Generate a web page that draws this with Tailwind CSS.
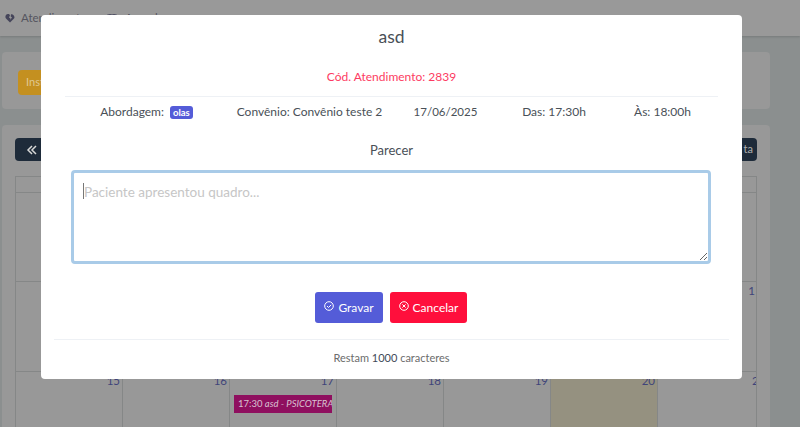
<!DOCTYPE html>
<html lang="pt-BR">
<head>
    <meta charset="UTF-8">
    <title>Atendimento</title>
    <script src="https://cdn.jsdelivr.net/npm/@tailwindcss/browser@4"></script>
</head>
<body class="font-['Lato',sans-serif] overflow-hidden">
    <div class="relative h-[427px] w-[800px] overflow-hidden bg-[#8b8f8f]">
        <!-- page behind the modal -->
        <nav class="flex h-9 items-center bg-[#999999] pl-1 text-[11.5px] text-[#55555f] shadow-[0_1px_2px_rgba(0,0,0,0.15)]">
            <svg class="ml-px h-2.5 w-2.5" viewBox="0 0 10 10"><path d="M5 9.500 1 5.500C-.5 3.500 1 1 3 1c1 0 1.600.5 2 1.200L4 4.500l1.500 1L5 7l2-2.500L5.700 3.500 6 1.300C8 .5 10.500 3.500 9 5.500z" fill="#45455a"/></svg>
            <span class="ml-[6px] w-[86px]">Atendimentos</span>
            <svg class="h-2.5 w-2.5" viewBox="0 0 10 10"><rect x="1" y="2" width="8" height="7" fill="none" stroke="#45455a" stroke-width="1.200"/><path d="M1 4h8M3 1v2M7 1v2" stroke="#45455a"/></svg>
            <span class="ml-2">Agenda</span>
        </nav>
        <main class="flex flex-col gap-4 pl-[2px] pr-[30px] pt-4">
            <section class="h-[57px] rounded bg-[#989898] px-4 pt-4">
                <button class="h-[25px] w-[60px] rounded bg-[#c49020] pl-2 text-left text-[11px] text-[#e0c890]">Instruções</button>
            </section>
            <section class="rounded-t bg-[#989898] px-[13px] pt-[13px]">
                <div class="flex justify-between">
                    <button class="flex h-[23px] w-[33px] items-center justify-center rounded bg-[#1e2b3a] text-[#d8d8d8]">
                        <svg class="h-3 w-3" viewBox="0 0 12 12" fill="none" stroke="currentColor" stroke-width="1.500"><path d="M6 2 2 6l4 4M10 2 6 6l4 4"/></svg>
                    </button>
                    <button class="flex h-[23px] w-[33px] items-center justify-end rounded bg-[#1e2b3a] pr-1 text-[11px] text-[#b0b0b0]">ta</button>
                </div>
                <div class="mt-[15px] grid h-[260px] grid-cols-[107px_107px_107px_107px_107px_107px_1fr] grid-rows-[16px_89px_90px_1fr] border-l border-t border-r border-[#858787] text-right text-[11.5px] leading-4 text-[#3f447a]">
                    <div class="col-span-7 border-b border-[#858787]"></div>
                    <div class="col-span-7 border-b border-[#858787]"></div>
                    <div class="col-span-7 border-b border-[#858787] pr-[1px] pt-[1px]">1</div>
                    <div class="border-r border-[#858787] pr-[2px] pt-[1px]">15</div>
                    <div class="border-r border-[#858787] pr-[2px] pt-[1px]">16</div>
                    <div class="border-r border-[#858787] pr-[2px] pt-[1px]">
                        17
                        <div class="ml-1 mt-[6px] flex h-[18px] w-[98px] items-center overflow-hidden whitespace-nowrap bg-[#8f0f5f] pl-1 text-left text-[9.500px] text-[#d8c0d0]"><span>17:30 <i>asd - PSICOTERAPIA</i></span></div>
                    </div>
                    <div class="border-r border-[#858787] pr-[2px] pt-[1px]">18</div>
                    <div class="border-r border-[#858787] pr-[2px] pt-[1px]">19</div>
                    <div class="border-r border-[#858787] bg-[#959180] pr-[2px] pt-[1px]">20</div>
                    <div class="overflow-hidden pl-[94px] pt-[1px] text-left">21</div>
                </div>
            </section>
        </main>

        <!-- modal -->
        <div class="absolute left-[41px] top-[15px] h-[364px] w-[701px] rounded bg-white text-[#495057]">
            <h5 class="pt-[10px] text-center text-[17.500px] leading-6">asd</h5>
            <p class="mt-[19px] text-center text-[12px] leading-[18px] text-[#fd3b62]">Cód. Atendimento: 2839</p>
            <div class="mx-6 mt-[10px] grid grid-cols-[163px_163px_109px_108px_109px] border-t border-[#eef1f5] pt-[6px] text-center text-[12px] leading-[18px]">
                <div class="flex items-center justify-center gap-[6px]">
                    <span>Abordagem:</span>
                    <span class="rounded-[3px] bg-[#545cd8] px-[3px] text-[9.500px] font-bold leading-[13px] text-white">olas</span>
                </div>
                <div>Convênio: Convênio teste 2</div>
                <div class="text-[11.500px]">17/06/2025</div>
                <div>Das: 17:30h</div>
                <div>Às: 18:00h</div>
            </div>
            <p class="mt-[20px] text-center text-[13px] leading-[18px]">Parecer</p>
            <div class="relative mx-[30px] mt-[11px]">
                <textarea class="block h-[94px] w-[640px] rounded border-[3px] border-[#a9cbe8] px-[10px] py-[9px] text-[13.500px] leading-5 outline-none placeholder:text-[#c6c6c6]" placeholder="Paciente apresentou quadro..."></textarea>
                <span class="absolute left-[12px] top-[13px] h-4 w-px bg-[#777777]"></span>
            </div>
            <div class="mt-[28px] flex justify-center gap-[7px] pr-px">
                <button class="flex h-[31px] w-[68px] items-center justify-center gap-1 rounded-[3px] bg-[#545cd8] text-[12px] text-white">
                    <svg class="mb-[3px] h-[10px] w-[10px]" viewBox="0 0 10 10" fill="none" stroke="currentColor"><circle cx="5" cy="5" r="4.300"/><path d="m3 5 1.500 1.500L7.200 3.800"/></svg>
                    Gravar
                </button>
                <button class="flex h-[31px] w-[77px] items-center justify-center gap-1 rounded-[3px] bg-[#ff0f3c] text-[12px] text-white">
                    <svg class="mb-[3px] h-[10px] w-[10px]" viewBox="0 0 10 10" fill="none" stroke="currentColor"><circle cx="5" cy="5" r="4.300"/><path d="m3.400 3.400 3.200 3.200M6.600 3.400 3.400 6.600"/></svg>
                    Cancelar
                </button>
            </div>
            <div class="mx-[13px] mt-[16px] border-t border-[#eef1f5] pt-[10px] text-center text-[11px] leading-4 text-[#6c6c6c]">
                Restam <span class="text-[#3f4a58]">1000</span> caracteres
            </div>
        </div>
    </div>
</body>
</html>
